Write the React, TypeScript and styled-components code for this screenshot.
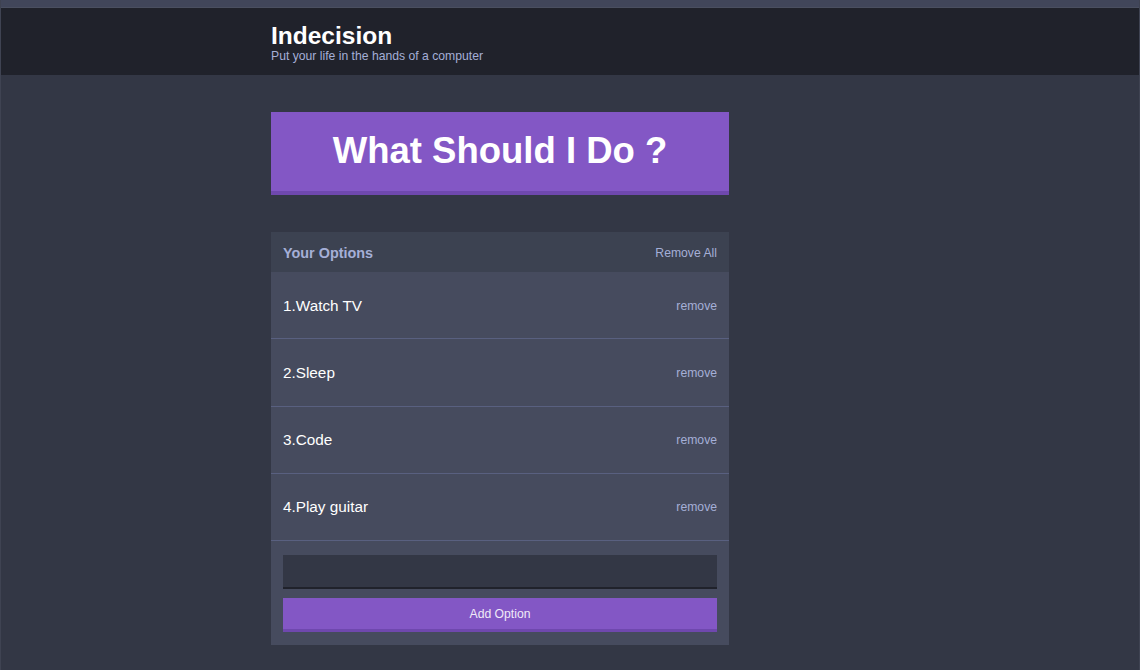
import React from "react";
import styled, { createGlobalStyle } from "styled-components";

const Global = createGlobalStyle`
  html, body { margin: 0; padding: 0; }
  body {
    background: #333745;
    font-family: "Liberation Sans", Arial, sans-serif;
    height: 670px;
    overflow: hidden;
  }
  * { box-sizing: border-box; }
`;

const Page = styled.div`
  height: 670px;
  border-left: 1px solid #3f4352;
  border-right: 1px solid #3f4352;
  display: flex;
  flex-direction: column;
`;

const TopStrip = styled.div`
  height: 8px;
  background: #41465a;
  border-bottom: 1px solid #4a4f60;
  overflow: hidden;
`;

const Header = styled.header`
  background: #20222b;
  height: 67px;
  padding-top: 16px;
`;

const Container = styled.div`
  width: 600px;
  margin: 0 auto;
  padding-left: 1px;
`;

const Title = styled.h1`
  margin: 0 0 1px;
  color: #ffffff;
  font-size: 24.5px;
  font-weight: bold;
  line-height: 24px;
`;

const Subtitle = styled.h2`
  margin: 0;
  color: #a5afd7;
  font-size: 12.2px;
  font-weight: normal;
  line-height: 14px;
`;

const Main = styled.div`
  width: 458px;
  padding-top: 37px;
  display: flex;
  flex-direction: column;
  gap: 37px;
`;

const BigButton = styled.button`
  background: #8357c5;
  border: none;
  border-bottom: 4px solid #6f48ae;
  color: #ffffff;
  font-family: inherit;
  font-size: 36.5px;
  font-weight: bold;
  height: 83px;
  width: 100%;
  padding: 0 0 2px;
  cursor: pointer;
`;

const Widget = styled.div`
  background: #464b5e;
`;

const WidgetHeader = styled.div`
  background: #3c4251;
  height: 40px;
  padding: 0 12px;
  display: flex;
  align-items: center;
  justify-content: space-between;
`;

const WidgetTitle = styled.h3`
  margin: 0;
  color: #a5afd7;
  font-size: 14.4px;
  font-weight: bold;
  padding-top: 1px;
`;

const LinkButton = styled.button`
  background: none;
  border: none;
  padding: 1px 0 0;
  color: #a5afd7;
  font-family: inherit;
  font-size: 12.2px;
  cursor: pointer;
`;

const OptionRow = styled.div`
  height: 67.25px;
  padding: 0 12px;
  border-bottom: 1px solid #596080;
  display: flex;
  align-items: center;
  justify-content: space-between;
`;

const OptionText = styled.p`
  margin: 0;
  padding-top: 1px;
  color: #ffffff;
  font-size: 15.3px;
`;

const Form = styled.form`
  padding: 14px 12px 13px;
  display: flex;
  flex-direction: column;
  gap: 9px;
`;

const Input = styled.input`
  height: 34px;
  background: #333745;
  border: none;
  border-bottom: 2px solid #20222b;
  color: #fff;
  font-family: inherit;
  font-size: 13px;
  padding: 0 10px;
  outline: none;
`;

const AddButton = styled.button`
  height: 34px;
  background: #8357c5;
  border: none;
  border-bottom: 3px solid #6f48ae;
  color: #f0eaf8;
  font-family: inherit;
  font-size: 12.2px;
  padding: 0;
  cursor: pointer;
`;

const options = ["Watch TV", "Sleep", "Code", "Play guitar"];

export default function App() {
  return (
    <>
      <Global />
      <Page>
        <TopStrip />
        <Header>
          <Container>
            <Title>Indecision</Title>
            <Subtitle>Put your life in the hands of a computer</Subtitle>
          </Container>
        </Header>
        <Container>
          <Main>
            <BigButton>What Should I Do ?</BigButton>
            <Widget>
              <WidgetHeader>
                <WidgetTitle>Your Options</WidgetTitle>
                <LinkButton>Remove All</LinkButton>
              </WidgetHeader>
              {options.map((o, i) => (
                <OptionRow key={o}>
                  <OptionText>
                    {i + 1}.{o}
                  </OptionText>
                  <LinkButton>remove</LinkButton>
                </OptionRow>
              ))}
              <Form onSubmit={(e) => e.preventDefault()}>
                <Input type="text" name="option" />
                <AddButton>Add Option</AddButton>
              </Form>
            </Widget>
          </Main>
        </Container>
      </Page>
    </>
  );
}
